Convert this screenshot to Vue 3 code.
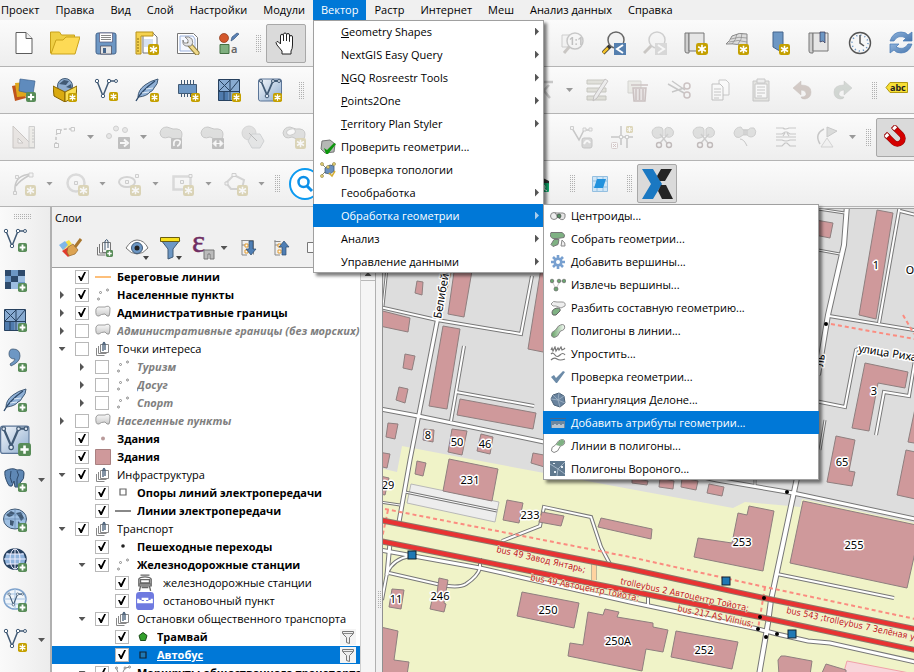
<script setup>
import { ref } from 'vue'

const mainMenu = ['Проект', 'Правка', 'Вид', 'Слой', 'Настройки', 'Модули', 'Вектор', 'Растр', 'Интернет', 'Меш', 'Анализ данных', 'Справка']

const vectorMenu = [
  { key: 'G', text: 'eometry Shapes', sub: true },
  { text: 'NextGIS Easy Query', sub: true },
  { key: 'N', text: 'GQ Rosreestr Tools', sub: true },
  { key: 'P', text: 'oints2One', sub: true },
  { key: 'T', text: 'erritory Plan Styler', sub: true },
  { text: 'Проверить геометрии...', icon: 'm-valid' },
  { text: 'Проверка топологии', icon: 'm-topo' },
  { text: 'Геообработка', sub: true },
  { text: 'Обработка геометрии', sub: true, open: true },
  { text: 'Анализ', sub: true },
  { text: 'Управление данными', sub: true }
]

const geometryMenu = [
  { text: 'Центроиды...', icon: 'm-centroid' },
  { text: 'Собрать геометрии...', icon: 'm-collect' },
  { text: 'Добавить вершины...', icon: 'm-gear' },
  { text: 'Извлечь вершины...', icon: 'm-extract' },
  { text: 'Разбить составную геометрию...', icon: 'm-multi' },
  { text: 'Полигоны в линии...', icon: 'm-poly' },
  { text: 'Упростить...', icon: 'm-simplify' },
  { text: 'Проверка геометрии...', icon: 'm-check' },
  { text: 'Триангуляция Делоне...', icon: 'm-delaunay' },
  { text: 'Добавить атрибуты геометрии...', icon: 'm-ruler', active: true },
  { text: 'Линии в полигоны...', icon: 'm-line' },
  { text: 'Полигоны Вороного...', icon: 'm-voronoi' }
]

const off = (icon, extra) => ({ icon, off: true, ...extra })
const grip = { grip: true }
const rows = [
  [
    { icon: 'new' }, { icon: 'open' }, { icon: 'save' }, { icon: 'layout' }, { icon: 'wrench' }, { icon: 'style' }, grip,
    { icon: 'hand', pressed: true }, { gap: 246 },
    off('zoom11'), { icon: 'zoomprev' }, off('zoomnext'), { icon: 'mapview' }, { icon: 'view3d' }, { icon: 'bookmarknew' },
    { icon: 'bookmark' }, { icon: 'clock' }, { icon: 'refresh' }
  ],
  [
    { icon: 'layers' }, { icon: 'geopackage' }, { icon: 'vnew' }, { icon: 'feathernew' }, { icon: 'chip' }, { icon: 'meshnew' }, { icon: 'vbox' },
    { grip: true, wide: true }, { gap: 213 },
    off('cross', { drop: true }), off('edit'), off('trash'), off('cut'), off('copy'), off('paste'), off('undo'), off('redo'),
    { grip: true, wide: true }, { icon: 'abc', slim: true }
  ],
  [
    off('measure'), off('curve', { drop: true }), off('points', { drop: true }), off('rotate'), off('scale'), off('hexa'), off('ring'),
    { gap: 246 },
    off('vtool'), off('trim'), off('split'), off('split'), off('merge'), off('offset'), off('rotsym', { drop: true }),
    grip, { icon: 'magnet', pressed: true }
  ],
  [
    off('arc', { drop: true }), off('circle', { drop: true }), off('ellipse', { drop: true }), off('rect', { drop: true }), off('poly', { drop: true }),
    grip, { icon: 'search', big: true }, { gap: 197 }, { icon: 'greenq' }, grip, { icon: 'bluesq' }, grip, { icon: 'nx', pressed: true, big: true }
  ]
]

const dock = [
  { icon: 'vplus' }, { icon: 'rasterplus' }, { icon: 'meshplus' }, { icon: 'comma' }, { icon: 'featherplus' },
  { icon: 'vboxplus', big: true }, { icon: 'postgis', drop: true }, { icon: 'wms' }, { icon: 'wcs' }, { icon: 'wfs' }, { icon: 'vstar', drop: true }
]

const panelTools = [
  { icon: 'brush' }, { icon: 'groupadd' }, { icon: 'eye' }, { icon: 'funnel' }, { icon: 'epsilon', drop: true },
  { icon: 'expand' }, { icon: 'collapse' }, { icon: 'remove' }
]

const tree = ref([
  { text: 'Береговые линии', icon: 't-line', on: true, bold: true },
  { text: 'Населенные пункты', icon: 't-points', on: true, bold: true, exp: 'right' },
  { text: 'Административные границы', icon: 't-area', on: true, bold: true, exp: 'right' },
  { text: 'Административные границы (без морских)', icon: 't-area', muted: true, exp: 'right' },
  { text: 'Точки интереса', icon: 't-group', exp: 'down' },
  { text: 'Туризм', icon: 't-points', muted: true, exp: 'right', level: 1 },
  { text: 'Досуг', icon: 't-points', muted: true, exp: 'right', level: 1 },
  { text: 'Спорт', icon: 't-points', muted: true, exp: 'right', level: 1 },
  { text: 'Населенные пункты', icon: 't-area', muted: true, exp: 'right' },
  { text: 'Здания', icon: 't-dot', on: true, bold: true },
  { text: 'Здания', icon: 't-fill', on: true, bold: true },
  { text: 'Инфраструктура', icon: 't-group', on: true, exp: 'down' },
  { text: 'Опоры линий электропередачи', icon: 't-square', on: true, bold: true, level: 1 },
  { text: 'Линии электропередачи', icon: 't-gray', on: true, bold: true, level: 1 },
  { text: 'Транспорт', icon: 't-group', on: true, exp: 'down' },
  { text: 'Пешеходные переходы', icon: 't-black', on: true, bold: true, level: 1 },
  { text: 'Железнодорожные станции', icon: 't-points', on: true, bold: true, exp: 'down', level: 1 },
  { text: 'железнодорожные станции', icon: 't-train', on: true, level: 2, large: true },
  { text: 'остановочный пункт', icon: 't-stop', on: true, level: 2, large: true },
  { text: 'Остановки общественного транспорта', icon: 't-group', on: true, exp: 'down', level: 1 },
  { text: 'Трамвай', icon: 't-pent', on: true, bold: true, level: 2, filter: true },
  { text: 'Автобус', icon: 't-bus', on: true, bold: true, level: 2, filter: true, selected: true },
  { text: 'Маршруты общественного транспорта', icon: 't-route', on: true, bold: true, exp: 'down', level: 1 }
])

const buildings = [
  '417,281 423,282 422,295 415,293', '455,265 473,265 464,317 448,314', '375,309 410,318 408,332 375,325',
  '443,326 460,329 447,409 429,406', '542,262 560,262 548,353 528,349', '405,354 415,356 412,370 403,368',
  '399,387 408,389 405,403 396,400', '460,399 536,413 533,429 457,415', '388,423 398,424 395,439 386,437',
  '424,429 434,430 433,442 423,440', '452,429 467,431 462,455 448,452', '481,434 493,437 490,454 477,451',
  '533,453 560,458 558,471 531,463', '378,452 390,454 387,468 378,466', '417,461 426,463 423,476 415,474',
  '449,459 498,469 492,501 443,491', '380,476 389,478 385,495 380,494', '507,500 523,503 519,523 503,520',
  '542,512 564,516 561,526 539,522', '601,518 652,529 651,539 598,527',
  '439,578 448,580 444,603 446,604 444,612 430,609 432,600 436,601', '392,589 404,590 401,609 389,607',
  '522,592 579,603 574,628 517,616',
  '588,612 603,615 605,609 619,612 617,617 653,623 653,627 668,630 663,652 646,649 642,671 568,656 570,643 583,645',
  '676,631 738,642 732,669 671,657', '385,628 398,631 394,660 409,662 407,675 380,675 380,627',
  '749,506 774,511 763,571 694,557 698,538 732,543 738,513 747,515', '803,501 921,526 907,588 790,563',
  '632,478 648,481 647,485 632,483', '660,478 674,481 673,489 659,487', '682,478 698,481 696,490 681,487',
  '709,484 724,487 722,496 707,493', '836,436 855,440 849,471 855,472 852,486 827,482',
  '906,450 920,453 920,500 897,495', '916,404 920,404 920,444 908,442', '877,210 893,213 876,319 859,315',
  '810,219 833,223 830,238 810,234', '865,363 908,372 905,388 878,383 869,431 852,428',
  '781,656 785,656 812,661 810,675 779,675 778,660', '826,664 846,670 846,675 821,675'
]

const roads = [
  { d: 'M387 268L383 306', w: 2 }, { d: 'M380 307L437 320L521 334L532 276', w: 3 }, { d: 'M464 346L451 421', w: 3 },
  { d: 'M456 392L534 406', w: 3 }, { d: 'M755 478V485', w: 2 }, { d: 'M777 574L894 598', w: 3 },
  { d: 'M818 209L845 213', w: 2 }, { d: 'M818 250L840 254', w: 2 }, { d: 'M829 316L920 331', w: 3 },
  { d: 'M900 205L879 323', w: 3 }, { d: 'M900 211L920 216', w: 3 }, { d: 'M862 347L856 350L845 407L815 401', w: 3 },
  { d: 'M825 420L820 450', w: 2 }, { d: 'M876 435L884 392L909 396L915 360', w: 3 },
  { d: 'M380 502L400 505', w: 2 }, { d: 'M405 492L497 511', w: 2 },
  { d: 'M502 541L540 526L544 507L591 517L601 547L611 566', w: 3 },
  { d: 'M389 573L437 584Q458 589 466 584Q478 576 480 568V558', w: 3 },
  { d: 'M410 556Q393 559 387 573L382 600', w: 3 }, { d: 'M390 543L387 575', w: 4 }, { d: 'M648 594V607', w: 3 },
  { d: 'M380 409L418 416L544 442L717 480L793 493L920 520', w: 4 },
  { d: 'M380 550L480 568L630 602L758 629L777 634L808 641L830 643L920 663', w: 4 },
  { d: 'M450 268L437 322L410 460L399 522', w: 4 },
  { d: 'M797 478L771 600L768 623L759 675', w: 5 },
  { d: 'M847 205L844 245L828 315L818 375', w: 5 }
]

const paths = ['M385 509L630 557L765 587L920 620', 'M388 510L382 538', 'M765 587L758 629', 'M831 324L920 340', 'M903 315L914 334']
const tramLines = ['M380 520L630 569L764 598L920 630', 'M380 541L630 591L760 617L920 651']
const crossings = [[826, 324], [787, 492], [764, 598], [760, 617], [758, 629], [766, 637], [777, 634]]
const stops = [[412, 555], [726, 581], [792, 634]]
const houseNumbers = [
  ['8', 428, 439], ['50', 457, 446], ['46', 485, 448], ['231', 470, 484], ['29', 388, 489], ['233', 530, 519], ['11', 396, 603],
  ['246', 440, 600], ['250', 548, 614], ['250А', 618, 645], ['252', 704, 654], ['253', 742, 546], ['255', 854, 549],
  ['65', 842, 466], ['3', 874, 395], ['1', 876, 269], ['О', 910, 274]
]
const routeLabels = [
  ['bus 49 Завод Янтарь;', 496, 552, 13], ['bus 49 Автоцентр Тойота;', 530, 580, 11], ['trolleybus 2 Автоцентр Тойота;', 620, 584, 12],
  ['bus 217 AS Vilnius;', 677, 611, 12], ['bus 543 ;trolleybus 7 Зелёная улица', 786, 613, 12]
]
</script>

<template>
  <svg class="paints" aria-hidden="true">
    <defs>
      <linearGradient id="g-blue" x1="0" y1="0" x2="1" y2="1"><stop offset="0" stop-color="#8fb3dc" /><stop offset="1" stop-color="#4a78ae" /></linearGradient>
      <linearGradient id="g-pale" x1="0" y1="0" x2="1" y2="1"><stop offset="0" stop-color="#f4f7fb" /><stop offset="1" stop-color="#8fadcf" /></linearGradient>
      <linearGradient id="g-gray" x1="0" y1="0" x2="0" y2="1"><stop offset="0" stop-color="#fafafa" /><stop offset="1" stop-color="#c9c9c9" /></linearGradient>
      <linearGradient id="g-green" x1="0" y1="0" x2="1" y2="0"><stop offset="0" stop-color="#62a062" /><stop offset="1" stop-color="#f5faf5" /></linearGradient>
    </defs>
  </svg>
  <svg class="sprite" aria-hidden="true">
    <symbol id="b-star" viewBox="0 0 10 10"><rect width="10" height="10" rx="2" fill="#c4a000" /><path d="M5 1.500v7M1.800 3.200l6.400 3.600M8.200 3.200L1.800 6.800" stroke="#fff" stroke-width="1.400" /></symbol>
    <symbol id="b-plus" viewBox="0 0 10 10"><rect width="10" height="10" rx="2" fill="#588c58" /><path d="M5 1.800v6.400M1.800 5h6.400" stroke="#fff" stroke-width="2" /></symbol>

    <symbol id="new" viewBox="0 0 24 24"><path d="M4 1.500h10l6 6v15H4z" fill="#fff" stroke="#5c5c5c" /><path d="M14 1.500v6h6" fill="#eee" stroke="#5c5c5c" /></symbol>
    <symbol id="open" viewBox="0 0 30 24"><path d="M.5 22V1h9l2 3h13v18z" fill="#efcf45" stroke="#c9a21a" /><path d="M1 23L6 9h7l3-3h14l-5 17z" fill="#fdda55" stroke="#c9a21a" /></symbol>
    <symbol id="save" viewBox="0 0 24 24"><rect x="2" y="2" width="20" height="21" rx="2" fill="#6d97c4" stroke="#44658c" /><path d="M5.500 2h13v9h-13z" fill="#fff" stroke="#557" stroke-width=".7" /><path d="M7 4.500h10M7 6.500h10M7 8.500h10" stroke="#888" /><path d="M6.500 15h11v8h-11z" fill="#e4e4e4" stroke="#445" stroke-width=".7" /><path d="M9 17h3v5H9z" fill="#44658c" /></symbol>
    <symbol id="layout" viewBox="0 0 24 24"><path d="M8 2h10l4 4v16H8z" fill="#fff" stroke="#777" /><path d="M1 1h17v4H6v18H1z" fill="#f5d24f" stroke="#b8921a" /><path d="M2 8h2M2 11h2M2 14h2M2 17h2M2 20h2" stroke="#8a6d10" /><path d="M9 8h9v8H9z" fill="#d6e1f2" /><use href="#b-star" x="13" y="13" width="11" height="11" /></symbol>
    <symbol id="wrench" viewBox="0 0 24 24"><path d="M1.500 2.500h16l4 4v16h-20z" fill="#fff" stroke="#777" /><path d="M4 5h13l2 3v12H4z" fill="#f5f8ff" stroke="#9cb2dd" /><path d="M13 13l8 9" stroke="#8a7a3a" stroke-width="5" stroke-linecap="round" /><path d="M14 14l7 8" stroke="#f0d98a" stroke-width="3.200" stroke-linecap="round" /><path d="M9 6l3 3v3l-4 0-1-3q-1 5 3 6l5 0q3-3 1-7-3-3-7-2z" fill="#e8e8e8" stroke="#777" stroke-width=".8" /></symbol>
    <symbol id="style" viewBox="0 0 24 24"><circle cx="7" cy="7" r="4.500" fill="#d4582c" stroke="#8a3414" stroke-width=".7" /><path d="M14 10l1-4 5-4 2 1-5 5z" fill="#5b82b5" stroke="#38577f" stroke-width=".7" /><path d="M3 13.500h9v9H3z" fill="#7faf7f" stroke="#437043" /><text x="14" y="22" font-family="Noto Sans" font-size="11" font-weight="600" fill="#666">a</text></symbol>
    <symbol id="hand" viewBox="0 0 24 24"><path d="M8 23v-3l-5-6q-2-3 0-3.500 1-.5 3.500 2.500V5q0-1.800 1.500-1.800T9.500 5v5V3.500Q9.500 2 11 2t1.500 1.500V10 4q0-1.500 1.500-1.500T15.500 4v6.500V6q0-1.500 1.500-1.500T18.500 6v8q0 4-1.500 6v3z" fill="#fff" stroke="#222" stroke-linejoin="round" /></symbol>
    <symbol id="zoom11" viewBox="0 0 24 24"><path d="M1 4h8v12H1z" fill="#eee" stroke="#888" /><path d="M9 15l-6 7" stroke="#8a7a6a" stroke-width="3" /><circle cx="14" cy="10" r="8" fill="#f5f5f5" stroke="#777" stroke-width="1.500" /><text x="8" y="14" font-family="Noto Sans" font-size="10" font-weight="700" fill="#666">1:1</text></symbol>
    <symbol id="zoomprev" viewBox="0 0 24 24"><path d="M9 14l-8 8" stroke="#333" stroke-width="4" /><path d="M6 17l-5 5" stroke="#f3c22b" stroke-width="2.500" /><circle cx="14" cy="9" r="8" fill="#f2f2f2" stroke="#666" stroke-width="1.500" /><path d="M12 12h12v12H12z" fill="#557fae" /><path d="M21 14l-6 4 6 4" fill="none" stroke="#fff" stroke-width="2" /></symbol>
    <symbol id="zoomnext" viewBox="0 0 24 24"><path d="M9 14l-8 8" stroke="#8a7a6a" stroke-width="3" /><circle cx="14" cy="9" r="8" fill="#f2f2f2" stroke="#888" stroke-width="1.500" /><path d="M12 12h12v12H12z" fill="#aaa" /><path d="M15 14l6 4-6 4" fill="none" stroke="#fff" stroke-width="2" /></symbol>
    <symbol id="mapview" viewBox="0 0 24 24"><path d="M1 2h4v20H3q-2 0-2-2z" fill="#d0d0d0" stroke="#777" /><path d="M5 2h15v18H5z" fill="#e6e6e6" stroke="#777" /><use href="#b-star" x="12" y="12" width="12" height="12" /></symbol>
    <symbol id="view3d" viewBox="0 0 24 24"><path d="M7 5q7-4 15-2v14q-8-5-21-4 4-3 6-8z" fill="#ddd" stroke="#888" /><path d="M6 8q8-3 16-1M4 11q9-3 18 0M12 3q-1 6-5 10M17 2q0 7-4 11" fill="none" stroke="#888" stroke-width=".7" /><use href="#b-star" x="13" y="13" width="11" height="11" /></symbol>
    <symbol id="bookmarknew" viewBox="0 0 24 24"><path d="M7 1h10v20l-5-2-5-3z" fill="#6d97c4" stroke="#44658c" /><use href="#b-star" x="13" y="13" width="11" height="11" /></symbol>
    <symbol id="bookmark" viewBox="0 0 24 24"><path d="M2 2h4v20H4q-2 0-2-2z" fill="#d0d0d0" stroke="#777" /><path d="M6 2h15v18H6z" fill="#e6e6e6" stroke="#777" /><path d="M13 1h5v11l-2-2-3 1z" fill="#6d97c4" stroke="#335" stroke-width=".7" /></symbol>
    <symbol id="clock" viewBox="0 0 24 24"><circle cx="12" cy="12" r="10.500" fill="#f7f7f7" stroke="#555" stroke-width="1.400" /><circle cx="12" cy="12" r="8" fill="none" stroke="#6d97c4" stroke-width="1.500" stroke-dasharray="1.200 3" /><path d="M12 4v8l4 3" fill="none" stroke="#555" stroke-width="1.500" /></symbol>
    <symbol id="refresh" viewBox="0 0 24 24"><path d="M1 10Q4 1 12 1q5 0 7 3l4-3v9h-9l3-3q-8-4-12 3z" fill="url(#g-blue)" stroke="#4678b5" stroke-width=".7" /><path d="M23 13q-3 9-11 9-5 0-7-3l-4 3v-9h9l-3 3q8 4 12-3z" fill="url(#g-blue)" stroke="#4678b5" stroke-width=".7" /></symbol>

    <symbol id="layers" viewBox="0 0 24 24"><path d="M0 8l10-2 4 14-11 3z" fill="#c0541c" /><path d="M3 5l12-1 2 14-12 1z" fill="#e0a81c" /><path d="M8 1l15 2-2 13-14-3z" fill="#5f8bbd" stroke="#3d638f" stroke-width=".7" /><use href="#b-plus" x="14" y="14" width="10" height="10" /></symbol>
    <symbol id="geopackage" viewBox="0 0 24 24"><circle cx="12" cy="8" r="7.500" fill="#8fadcf" stroke="#415a75" /><path d="M6 6l5-4 5 1-3 4zM13 9l5-3 1 5z" fill="#415a75" /><path d="M0 8l12 6v10L1 18z" fill="#d9aa10" stroke="#846200" /><path d="M12 14l12-6-1 10-11 6z" fill="#f9df55" stroke="#846200" /><use href="#b-star" x="15" y="15" width="9" height="9" /></symbol>
    <symbol id="vshape" viewBox="0 0 24 24"><path d="M3 3l6 15 6-15h7" fill="none" stroke="#415a75" stroke-width="1.500" /><g fill="#fff" stroke="#415a75"><circle cx="3" cy="3" r="1.700" /><circle cx="9" cy="18" r="1.700" /><circle cx="15" cy="3" r="1.700" /><circle cx="22" cy="3" r="1.500" /></g></symbol>
    <symbol id="vnew" viewBox="0 0 24 24"><use href="#vshape" width="24" height="24" /><use href="#b-star" x="15" y="14" width="9" height="9" /></symbol>
    <symbol id="vplus" viewBox="0 0 24 24"><use href="#vshape" width="24" height="24" /><use href="#b-plus" x="15" y="15" width="9" height="9" /></symbol>
    <symbol id="vstar" viewBox="0 0 24 24"><use href="#vshape" width="24" height="24" /><use href="#b-star" x="15" y="15" width="9" height="9" /></symbol>
    <symbol id="feather" viewBox="0 0 24 24"><path d="M3 19q0-7 7-12Q15 3 23 1q0 5-4 9-1 3-4 4-3 4-11 5z" fill="#8fb0d6" stroke="#415a75" /><path d="M1 23Q6 13 20 3" fill="none" stroke="#2e4a6b" stroke-width="1.300" /><path d="M7 15l7-1M11 11l7-1" fill="none" stroke="#e8f0f8" stroke-width=".9" /></symbol>
    <symbol id="feathernew" viewBox="0 0 24 24"><use href="#feather" width="24" height="24" /><use href="#b-star" x="15" y="15" width="9" height="9" /></symbol>
    <symbol id="featherplus" viewBox="0 0 24 24"><use href="#feather" width="24" height="24" /><use href="#b-plus" x="15" y="15" width="9" height="9" /></symbol>
    <symbol id="chip" viewBox="0 0 24 24"><path d="M5.500 2v17M8.500 2v17M11.500 2v17M14.500 2v17M17.500 2v17" stroke="#415a75" /><path d="M2.500 6.500h18v9h-18z" fill="#6d97c4" stroke="#415a75" /><use href="#b-star" x="15" y="15" width="9" height="9" /></symbol>
    <symbol id="mesh" viewBox="0 0 24 24"><path d="M1.500 1.500h21v21h-21z" fill="#88abd2" /><path d="M1.500 13.500h10v9h-10z" fill="#4f7bad" /><path d="M1.500 1.500h21v21h-21zM1.500 13.500h21M13 1.500v21M2 2l11 11M2 13L13 2M22 2l-9 11M7 14v8" fill="none" stroke="#27415f" /></symbol>
    <symbol id="meshnew" viewBox="0 0 24 24"><use href="#mesh" width="24" height="24" /><use href="#b-star" x="15" y="15" width="9" height="9" /></symbol>
    <symbol id="meshplus" viewBox="0 0 24 24"><use href="#mesh" width="24" height="24" /><use href="#b-plus" x="15" y="15" width="9" height="9" /></symbol>
    <symbol id="vboxbase" viewBox="0 0 24 24"><rect x=".5" y="1" width="23" height="22" rx="2" fill="url(#g-pale)" stroke="#5b7597" /><path d="M3 3l6 14 6-14h6" fill="none" stroke="#415a75" stroke-width="1.800" /><g fill="#dfe8f3" stroke="#415a75"><circle cx="3" cy="3" r="1.500" /><circle cx="9" cy="18" r="1.800" /><circle cx="15" cy="3" r="1.500" /><circle cx="21" cy="3" r="1.500" /></g></symbol>
    <symbol id="vbox" viewBox="0 0 24 24"><use href="#vboxbase" width="24" height="24" /><use href="#b-star" x="15" y="15" width="9" height="9" /></symbol>
    <symbol id="vboxplus" viewBox="0 0 24 24"><use href="#vboxbase" width="23" height="23" /><use href="#b-plus" x="14" y="14" width="10" height="10" /></symbol>
    <symbol id="cross" viewBox="0 0 24 24"><path d="M7 4h14M8 8l10 12M17 7L5 20" stroke="#777" stroke-width="2.500" /></symbol>
    <symbol id="edit" viewBox="0 0 24 24"><path d="M2 2h19v4H2zM2 10h19v4H2zM2 18h19v4H2z" fill="#bdbd9a" stroke="#777755" /><path d="M20 1l3 2L12 20l-4 3 1-5z" fill="#ddd" stroke="#766" /></symbol>
    <symbol id="trash" viewBox="0 0 24 24"><path d="M2 3h13v12H2z" fill="#d8d8c0" stroke="#998" /><path d="M5 7h17M7 10h13l-1 13H8zM10 11v11M13.500 11v11M17 11v11" fill="#dcc8c8" stroke="#966" stroke-width="1.500" /></symbol>
    <symbol id="cut" viewBox="0 0 24 24"><path d="M1 6l16 9M5 3l13 9M17 10L5 14" stroke="#777" stroke-width="1.500" /><circle cx="20" cy="8" r="3" fill="none" stroke="#966" stroke-width="1.500" /><circle cx="20" cy="17" r="3" fill="none" stroke="#966" stroke-width="1.500" /></symbol>
    <symbol id="copy" viewBox="0 0 24 24"><path d="M11 2h7l3 3v12H11z" fill="#fff" stroke="#777" /><path d="M4 6h8l3 3v13H4z" fill="#fff" stroke="#666" /><path d="M6 11h7M6 14h7M6 17h7M6 20h5" stroke="#777" /></symbol>
    <symbol id="paste" viewBox="0 0 24 24"><path d="M4 3h16v20H4z" fill="#c8c8b8" stroke="#777" /><path d="M6 6h12v14H6z" fill="#fff" stroke="#777" /><path d="M8 9h8M8 12h8M8 15h8M8 18h5" stroke="#777" /><path d="M8 1h8v4H8z" fill="#ddd" stroke="#777" /></symbol>
    <symbol id="undo" viewBox="0 0 24 24"><path d="M3 10l8-7v4q10 0 10 7 0 6-6 7-4 0-4-2 6 0 5-4-1-3-5-3v5z" fill="#aa7a62" stroke="#865" stroke-width=".5" /></symbol>
    <symbol id="redo" viewBox="0 0 24 24"><path d="M21 10l-8-7v4Q3 7 3 14q0 6 6 7 4 0 4-2-6 0-5-4 1-3 5-3v5z" fill="#8ca892" stroke="#777" stroke-width=".5" /></symbol>
    <symbol id="abc" viewBox="0 0 24 24"><path d="M1 9.500L5 4.500h17.500v10H5z" fill="#f7df35" stroke="#b29a10" /><text x="5" y="13" font-family="Noto Sans" font-size="9" font-weight="700" fill="#222">abc</text></symbol>

    <symbol id="measure" viewBox="0 0 24 24"><path d="M1 1l22 22H1zM6 13v5h5z" fill="#dac6ba" stroke="#8a7468" fill-rule="evenodd" /><path d="M17 1.500h5.500v21H17z" fill="#e0dac6" stroke="#888" /><path d="M20 5h2M20 8h2M20 11h2M20 14h2M20 17h2" stroke="#777" /></symbol>
    <symbol id="curve" viewBox="0 0 24 24"><path d="M3 20V13Q3 4 14 4h6" fill="none" stroke="#777" stroke-width="1.500" stroke-dasharray="3 2" /><path d="M1.500 18.500h4v4h-4zM3.500 4.500h4v4h-4zM18 2.500h3.500V6H18z" fill="#fff" stroke="#777" /></symbol>
    <symbol id="points" viewBox="0 0 24 24"><g fill="#ccc" stroke="#888"><circle cx="3" cy="11" r="2.500" /><circle cx="10" cy="3.500" r="2.500" /><circle cx="19" cy="5" r="2.500" /></g><rect x="12" y="12" width="12" height="12" rx="1" fill="#666" /><path d="M14 18h6M18 14.500l4 3.500-4 3.500" fill="none" stroke="#fff" stroke-width="2" /></symbol>
    <symbol id="blob" viewBox="0 0 24 24"><path d="M1 8Q2 2 8 2l6 2q9-1 9 5 0 7-6 6L10 12Q2 15 1 8z" fill="#b5b9b5" stroke="#777" /></symbol>
    <symbol id="rotate" viewBox="0 0 24 24"><use href="#blob" width="24" height="24" /><rect x="12" y="13" width="11" height="11" rx="1" fill="#666" /><path d="M15 21q-1-6 3-6t3 3-3 3" fill="none" stroke="#fff" stroke-width="1.700" /></symbol>
    <symbol id="scale" viewBox="0 0 24 24"><use href="#blob" width="24" height="24" /><rect x="12" y="13" width="12" height="11" rx="1" fill="#666" /><path d="M13 18.500l3-3v6zM23 18.500l-3-3v6zM15 18.500h6" fill="#fff" stroke="#fff" /></symbol>
    <symbol id="hexa" viewBox="0 0 24 24"><circle cx="8" cy="8" r="7" fill="#bbb" stroke="#999" /><path d="M11 9h8l4 7-4 7h-8l-4-7z" fill="#c8cdd2" stroke="#8a949c" /><path d="M8 8l8 8" stroke="#555" /></symbol>
    <symbol id="ring" viewBox="0 0 24 24"><use href="#blob" width="24" height="24" /><ellipse cx="9" cy="7" rx="4.500" ry="3" fill="#fff" stroke="#888" transform="rotate(-20 9 7)" /><use href="#b-star" x="13" y="13" width="11" height="11" /></symbol>
    <symbol id="vtool" viewBox="0 0 24 24"><path d="M3 3l7 12 5-10h7" fill="none" stroke="#777" stroke-width="1.500" /><path d="M1.500 1.500h3v3h-3zM14 3h3v3h-3zM20 3h3v3h-3z" fill="#eee" stroke="#888" /><rect x="13" y="13" width="10" height="10" rx="2" fill="#aaa" stroke="#777" /><path d="M15 19q3-6 6-1" fill="none" stroke="#fff" stroke-width="2" /></symbol>
    <symbol id="trim" viewBox="0 0 24 24"><path d="M11 1v12M1 12h22M11 13v7M17 12v11" fill="none" stroke="#777" stroke-width="1.500" /><path d="M9.500 10.500h3v3h-3zM15.500 10.500h3v3h-3z" fill="#fff" stroke="#888" /><rect x="1.500" y="17.500" width="6" height="6" rx="1" fill="#fff" stroke="#b88" /><path d="M3 19l3 3M6 19l-3 3" stroke="#b66" /><use href="#b-star" x="16" y="1" width="7" height="7" /></symbol>
    <symbol id="split" viewBox="0 0 24 24"><path d="M1 7Q2 2 8 2q4 0 4 3v6Q6 15 3 12 1 10 1 7zM14 4q2-3 6-1 4 3 2 7-3 4-8 1z" fill="#b5b9b5" stroke="#888" /><path d="M9 18l8-9M16 18L9 9" stroke="#888" stroke-width="1.500" /><circle cx="8" cy="20" r="2.500" fill="none" stroke="#755" stroke-width="1.400" /><circle cx="18" cy="20" r="2.500" fill="none" stroke="#755" stroke-width="1.400" /></symbol>
    <symbol id="merge" viewBox="0 0 24 24"><path d="M1 8Q2 2 8 2l2 3h5q2-3 6-2 3 3 1 7-4 4-8 0h-4Q6 14 3 12 1 10 1 8z" fill="#b5b9b5" stroke="#888" /><path d="M10 5h5M10 7h5M10 9h5M7 14q4 0 7 7" fill="none" stroke="#777" /></symbol>
    <symbol id="offset" viewBox="0 0 24 24"><path d="M2 3h7q2 2 6 0h7M2 9h6l3-2h2l3 2h6M2 12h20M2 15h6q4 2 8 0h6M2 21h6l3-3h2l3 3h6M9 11l2-3M15 11l-2-3" fill="none" stroke="#777" stroke-width="1.200" /></symbol>
    <symbol id="rotsym" viewBox="0 0 24 24"><path d="M12 2v10l10-6z" fill="#aab0ac" stroke="#777" /><path d="M12 13l6 9H6z" fill="#eee" stroke="#999" /><path d="M5 19Q-1 9 9 4" fill="none" stroke="#777" stroke-width="1.500" /></symbol>
    <symbol id="magnet" viewBox="0 0 24 24"><g transform="rotate(-45 12 12)" fill="none"><path d="M6.500 4v10a5.500 5.500 0 0 0 11 0V4" stroke="#8e1010" stroke-width="5.600" /><path d="M6.500 4v10a5.500 5.500 0 0 0 11 0V4" stroke="#d40000" stroke-width="4.600" /><path d="M6.500 2v5M17.500 2v5" stroke="#a01010" stroke-width="5.600" /><path d="M6.500 3v3M17.500 3v3" stroke="#fff" stroke-width="4" /></g></symbol>

    <symbol id="arc" viewBox="0 0 24 24"><path d="M3 20V15Q4 3 19 2M4 14q4-6 14-11" fill="none" stroke="#777" stroke-width="1.500" /><path d="M1.500 19.500h3v3h-3zM3.500 3.500h3v3h-3zM17 1h4v4h-4z" fill="#eee" stroke="#888" /><use href="#b-star" x="13" y="13" width="11" height="11" /></symbol>
    <symbol id="circle" viewBox="0 0 24 24"><circle cx="11" cy="11" r="8.500" fill="none" stroke="#aaa" stroke-width="2.500" /><path d="M9.500 9.500h3v3h-3z" fill="#eee" stroke="#888" /><use href="#b-star" x="13" y="13" width="11" height="11" /></symbol>
    <symbol id="ellipse" viewBox="0 0 24 24"><ellipse cx="9" cy="10" rx="8" ry="5" fill="none" stroke="#999" stroke-width="2" /><path d="M7.500 8.500h3v3h-3zM17.500 2.500h3v3h-3z" fill="#eee" stroke="#888" /><use href="#b-star" x="12" y="13" width="11" height="11" /></symbol>
    <symbol id="rect" viewBox="0 0 24 24"><path d="M2.500 4.500h17v13h-17z" fill="none" stroke="#aaa" stroke-width="2.500" /><path d="M9.500 8.500h3v3h-3zM18 2.500h3v3h-3z" fill="#eee" stroke="#888" /><use href="#b-star" x="12" y="13" width="11" height="11" /></symbol>
    <symbol id="poly" viewBox="0 0 24 24"><path d="M2 11l8-8 10 5-2 9H7z" fill="none" stroke="#999" stroke-width="2" /><path d="M8 1.500h4v3H8zM1 10h3v3H1z" fill="#eee" stroke="#888" /><use href="#b-star" x="13" y="13" width="11" height="11" /></symbol>
    <symbol id="search" viewBox="0 0 32 32"><circle cx="16" cy="16" r="15" fill="#fff" stroke="#0c9af0" stroke-width="2" /><circle cx="14.500" cy="14" r="5" fill="none" stroke="#0c8fe8" stroke-width="2.500" /><path d="M18 18l5 5" stroke="#0c8fe8" stroke-width="3" /></symbol>
    <symbol id="greenq" viewBox="0 0 24 24"><path d="M8 4l10 5v6H8z" fill="#333" /><rect x="7" y="11" width="11" height="9" rx="1" fill="#12a86c" /><circle cx="12" cy="15" r="2" fill="none" stroke="#fff" /><path d="M13 17l3 2" stroke="#fff" /></symbol>
    <symbol id="bluesq" viewBox="0 0 24 24"><path d="M4.500 4.500h15v15h-15zM9 4v16M15 4v16M4 9h16M4 15h16" fill="#cfe6f7" stroke="#94bfe0" /><path d="M9 7h9l-3 9H6z" fill="#2292dd" /></symbol>
    <symbol id="nx" viewBox="0 0 32 32"><path d="M1 1h11l9 15-9 15H1l9-15z" fill="#1a78c2" /><path d="M20 1h11l-7 12h-5l-3-5zM17 23l3-6h5l7 14H21z" fill="#242424" /></symbol>

    <symbol id="rasterplus" viewBox="0 0 24 24"><path d="M2 2h20v19H2z" fill="#6d97c4" /><path d="M2 2h6v6H2zM15 2h7v6h-7zM8 8h7v6H8zM2 14h6v7H2z" fill="#2e4a6b" /><path d="M15 8h7v6h-7zM8 14h7v7H8z" fill="#9dbde0" /><use href="#b-plus" x="15" y="15" width="9" height="9" /></symbol>
    <symbol id="comma" viewBox="0 0 24 24"><path d="M10 1q7 0 7 7 0 6-9 10l-1-2q5-3 5-5-6 0-6-5t4-5z" fill="#6d97c4" stroke="#415a75" stroke-width=".8" /><use href="#b-plus" x="15" y="15" width="9" height="9" /></symbol>
    <symbol id="postgis" viewBox="0 0 24 24"><path d="M2 3Q9-1 14 2q7-1 7 3 1 6-4 10l-1 4h-4l-1-6-2 5q-3 1-4-2Q1 8 2 3z" fill="#5f88b5" stroke="#2e4a6b" /><path d="M8 3q-2 7 1 12M14 3q3 4 0 8v7" fill="none" stroke="#2e4a6b" /><use href="#b-plus" x="15" y="15" width="9" height="9" /></symbol>
    <symbol id="wms" viewBox="0 0 24 24"><ellipse cx="12" cy="11" rx="11.500" ry="10" fill="#9fc0e3" stroke="#415a75" /><path d="M3 7l5-4 4 2-3 3-3 1zM13 5l5-1 3 6-3 3-2-4zM7 12l4 1-1 5-3-1zM15 13l3 3-3 2z" fill="#415a75" /><path d="M1 11h22M12 1v20M4 5q8 4 16 0" fill="none" stroke="#5a7da5" stroke-width=".6" /><use href="#b-plus" x="15" y="15" width="9" height="9" /></symbol>
    <symbol id="wcs" viewBox="0 0 24 24"><ellipse cx="12" cy="11" rx="11" ry="10" fill="#8fb3dc" stroke="#27415f" stroke-width="1.500" /><path d="M4 4q8-5 16 0l-2 2H6zM4 18l2-2h12l2 2q-8 5-16 0z" fill="#27415f" /><ellipse cx="12" cy="11" rx="5" ry="10" fill="none" stroke="#eef" /><path d="M1 11h22M12 1v20M3 6h18M3 16h18" stroke="#eef" /><use href="#b-plus" x="15" y="15" width="9" height="9" /></symbol>
    <symbol id="wfs" viewBox="0 0 24 24"><ellipse cx="12" cy="11" rx="11" ry="10" fill="#f0f5fa" stroke="#7fa3cc" stroke-width="1.500" /><path d="M1 11h22M3 6h18M3 16h18M12 1v20" stroke="#a5c3e3" /><use href="#vshape" x="4" y="4" width="17" height="17" /><use href="#b-plus" x="15" y="15" width="9" height="9" /></symbol>

    <symbol id="brush" viewBox="0 0 24 24"><path d="M1 9l9-5 3 4-9 6z" fill="#f5e14a" /><path d="M0 9l6-4 3 4-5 5z" fill="#7fb6e8" /><path d="M3 15l8-5 5 5-7 6z" fill="#e23a2c" /><path d="M9 11l5-3 5 6-3 4-6 2-2-4z" fill="#dca352" stroke="#946528" stroke-width=".7" /><path d="M16 11l6-8" stroke="#a8762e" stroke-width="3" /></symbol>
    <symbol id="groupadd" viewBox="0 0 24 24"><path d="M5.500 11v8h8M7.500 8v9h9M10.500 6.500h8v10h-8z" fill="#f8f8f8" stroke="#777" /><path d="M13 14V5q2-3 3 0v7" fill="none" stroke="#415a75" /><use href="#b-plus" x="14" y="14" width="7" height="7" /></symbol>
    <symbol id="eye" viewBox="0 0 24 24"><path d="M1 12q5-8 11-8 7 0 11 8-5 6-11 6T1 12z" fill="#fff" stroke="#777" /><circle cx="12" cy="12" r="5.500" fill="#6d97c4" stroke="#415a75" /><circle cx="12" cy="12" r="2.500" fill="#222" /><path d="M18 20h6l-3 4z" fill="#444" /></symbol>
    <symbol id="funnel" viewBox="0 0 24 24"><path d="M3 4l7 9v10l5-2v-8l7-9z" fill="#6d97c4" stroke="#415a75" /><path d="M2.500 1.500h19v4h-19z" fill="#f8e01c" stroke="#6b5d10" /><path d="M18 20h6l-3 4z" fill="#444" /></symbol>
    <symbol id="epsilon" viewBox="0 0 24 24"><text x="1" y="16" font-family="Liberation Serif" font-size="31" fill="#6f2e62" stroke="#6f2e62" stroke-width=".5">ε</text><path d="M13 14v9h4v-5h2v5h4v-9z" fill="#bbb" stroke="#777" /></symbol>
    <symbol id="expand" viewBox="0 0 24 24"><path d="M5 4v15h5M5 9h5M4.500 4.500h12v14" fill="none" stroke="#888" /><path d="M8 8h3v3H8zM8 14h3v3H8z" fill="#fff" stroke="#e29a2c" /><path d="M12 5h4v8h3l-5 6-5-6h3z" fill="#4f7fb5" stroke="#2e4a6b" stroke-width=".7" /></symbol>
    <symbol id="collapse" viewBox="0 0 24 24"><path d="M5 4v15h5M5 9h5M4.500 5.500h6" fill="none" stroke="#888" /><path d="M8 8h3v3H8zM8 14h3v3H8z" fill="#fff" stroke="#e29a2c" /><path d="M12 19h4v-8h3l-5-6-5 6h3z" fill="#4f7fb5" stroke="#2e4a6b" stroke-width=".7" /></symbol>
    <symbol id="remove" viewBox="0 0 24 24"><path d="M4.500 6.500h13v10h-13z" fill="#fafafa" stroke="#777" /></symbol>

    <symbol id="m-valid" viewBox="0 0 16 16"><path d="M2 2l8-1 5 4-1 8-9 1-4-4z" fill="#b5b8b5" stroke="#777" /><path d="M4 9l3 2 7-7 2 1-8 10H6z" fill="#0c960c" /></symbol>
    <symbol id="m-topo" viewBox="0 0 16 16"><path d="M2 2l4 4M2 13l4-4M13 2l-3 3" stroke="#8a8a6a" /><path d="M5 11V6l5-3 4 1v5l-4 3z" fill="#6a90bf" stroke="#415a75" stroke-width=".8" /><g fill="#e8d478" stroke="#8a7a3a" stroke-width=".6"><circle cx="2" cy="2" r="1.500" /><circle cx="8" cy="5" r="1.500" /><circle cx="14" cy="2" r="1.500" /><circle cx="2" cy="14" r="1.500" /></g><path d="M9 11l3 3 3-5" fill="none" stroke="#d4ae35" stroke-width="1.500" /></symbol>
    <symbol id="m-centroid" viewBox="0 0 16 16"><circle cx="4" cy="8" r="3.500" fill="#eee" stroke="#888" /><path d="M5 5h8q3 0 2 4-1 4-5 2z" fill="#e4e4e4" stroke="#888" /><circle cx="9" cy="8" r="2" fill="#558d62" stroke="#333" stroke-width=".6" /></symbol>
    <symbol id="m-collect" viewBox="0 0 16 16"><path d="M1 1.500h11q4 2 2 5l-7 1H3Q-1 6 1 1.500zM4 8.500h5l-1 5-5 2-2-2z" fill="#7fb183" stroke="#777" /><path d="M12 9q4 3 3 6h-4z" fill="#eee" stroke="#888" /></symbol>
    <symbol id="m-gear" viewBox="0 0 16 16"><path d="M8 1v14M1 8h14M3 3l10 10M13 3L3 13" stroke="#78a0d0" stroke-width="2.600" /><circle cx="8" cy="8" r="4.500" fill="#78a0d0" /><circle cx="8" cy="8" r="2" fill="#fff" /></symbol>
    <symbol id="m-extract" viewBox="0 0 16 16"><path d="M2 4l4 8 4-8h4" fill="none" stroke="#ccc" /><g fill="#6aa56f" stroke="#666" stroke-width=".7"><circle cx="2" cy="4" r="1.800" /><circle cx="9" cy="4" r="1.800" /><circle cx="14" cy="4" r="1.800" /><circle cx="6" cy="12" r="2" /></g></symbol>
    <symbol id="m-multi" viewBox="0 0 16 16"><path d="M1 4q2-4 6-2h5q4 0 3 4l-4 2-5-2H3z" fill="#eee" stroke="#999" /><path d="M2 13q0-4 5-5 4 0 3 3l-4 4q-4 1-4-2z" fill="#7fb183" stroke="#666" /></symbol>
    <symbol id="m-poly" viewBox="0 0 16 16"><path d="M1.500 13q-1-4 4-6l3-4q5-3 6 0 1 4-4 5l-3 5q-4 3-6 0z" fill="url(#g-green)" stroke="#888" /></symbol>
    <symbol id="m-simplify" viewBox="0 0 16 16"><path d="M1 4l1-2 1 3 2-4 1 4 2-3 1 2 2-3 1 3 2-1 1-1M1 8q2-2 4 1t5 0 5 0M1 14q3-3 6-1t8 0" fill="none" stroke="#777" stroke-width="1.200" /></symbol>
    <symbol id="m-check" viewBox="0 0 16 16"><path d="M1 8l3-2 2 3 7-7 2 1-8 11H6z" fill="#6c8ba8" /></symbol>
    <symbol id="m-delaunay" viewBox="0 0 16 16"><path d="M3 3l6-2 5 3 1 7-5 4-6-2-3-6z" fill="#69839e" stroke="#4c6379" /><path d="M3 3l5 5 6-4M8 8l2 7M8 8l7 3M8 8l-7-1M9 1L8 8" fill="none" stroke="#a2b5c7" stroke-width=".8" /></symbol>
    <symbol id="m-ruler" viewBox="0 0 16 16"><path d="M0 3h16v1H0z" fill="#3d6894" /><path d="M1 6h14v7H1z" fill="#6e879e" /><path d="M3 13v-3M5 13V9M7 13v-3M9 13V9M11 13v-3M13 13V9" stroke="#fff" /></symbol>
    <symbol id="m-line" viewBox="0 0 16 16"><path d="M1.500 13q-1-4 4-6l3-4q5-3 6 0 1 4-4 5l-3 5q-4 3-6 0z" fill="#fff" stroke="#888" /><path d="M6 7l3-4q4-3 5 0 1 4-4 5z" fill="#7fb183" /></symbol>
    <symbol id="m-voronoi" viewBox="0 0 16 16"><path d="M0 0h15v15H0z" fill="#60798f" /><path d="M0 3l8 5 7-7M8 8l-1 7M8 8l7 5" fill="none" stroke="#a2b5c7" /><path d="M4 10h2v2H4zM3 2h2v1H3zM11 5h2v2h-2z" fill="#e5edf4" /></symbol>

    <symbol id="t-line" viewBox="0 0 16 16"><path d="M0 8h16" stroke="#fdbf7a" stroke-width="2" /></symbol>
    <symbol id="t-gray" viewBox="0 0 16 16"><path d="M0 8h16" stroke="#888" stroke-width="2" /></symbol>
    <symbol id="t-points" viewBox="0 0 16 16"><g fill="#fff" stroke="#888"><circle cx="3.500" cy="12" r="1" /><circle cx="5.500" cy="5.500" r="1" /><circle cx="12.500" cy="3" r="1" /></g></symbol>
    <symbol id="t-area" viewBox="0 0 16 16"><path d="M1 4q1-3 5-2h4q4-2 5 1 0 6-1 8-2 1-4-2-4 0-6 2-4 1-3-7z" fill="url(#g-gray)" stroke="#888" stroke-width=".8" /></symbol>
    <symbol id="t-group" viewBox="0 0 16 16"><path d="M1.500 7v7.500h8M3.500 5v7.500h8M5.500 3.500h8v8h-8z" fill="none" stroke="#888" /><path d="M8 10V3q1-3 2 0v6" fill="none" stroke="#415a75" stroke-width="1.300" /></symbol>
    <symbol id="t-dot" viewBox="0 0 16 16"><circle cx="8" cy="7.500" r="2" fill="#b99a9a" /></symbol>
    <symbol id="t-fill" viewBox="0 0 16 16"><path d="M.5.500h15v15H.5z" fill="#cf999b" stroke="#a98080" /></symbol>
    <symbol id="t-square" viewBox="0 0 16 16"><path d="M5 4h6v6H5z" fill="#fff" stroke="#666" stroke-width="1.200" /></symbol>
    <symbol id="t-black" viewBox="0 0 16 16"><circle cx="8" cy="7" r="1.800" fill="#222" /></symbol>
    <symbol id="t-train" viewBox="0 0 16 16"><path d="M4 1h8M2.500 4.500q1-2 5.500-2t5.500 2v6h-11zM4 5h8v3H4zM4 11l-1 4M12 11l1 4M5 12h6M3 9h10" fill="none" stroke="#666" stroke-width="1.200" /></symbol>
    <symbol id="t-stop" viewBox="0 0 16 16"><rect width="16" height="16" rx="3" fill="#6f7ae0" /><path d="M1 6h2v3H1zM5 5h6v2h2v3H3V7h2zM13 6h2v3h-2zM1 9h14v1H1z" fill="#fff" /><path d="M5 7h2v1H5zM9 7h2v1H9z" fill="#6f7ae0" /></symbol>
    <symbol id="t-pent" viewBox="0 0 16 16"><path d="M8 3.500l4 3-1.500 5h-5L4 6.500z" fill="#33a02c" stroke="#1a4a18" /></symbol>
    <symbol id="t-bus" viewBox="0 0 16 16"><path d="M5 5h6v6H5z" fill="#1f78b4" stroke="#123" stroke-width="1.200" /></symbol>
    <symbol id="t-route" viewBox="0 0 16 16"><path d="M1 2l4 11 5-10 5-1" fill="none" stroke="#888" /><g fill="#fff" stroke="#888"><circle cx="1.500" cy="3" r="1" /><circle cx="10" cy="3" r="1" /><circle cx="14.500" cy="2" r="1" /></g></symbol>
    <symbol id="t-filter" viewBox="0 0 16 16"><path d="M2.500 2.500h11v2L9.500 8.500v6l-3-1v-5l-4-4z" fill="#eee" stroke="#777" /><path d="M3 4.500h10" stroke="#888" /></symbol>
  </svg>

  <div class="window">
    <nav class="menubar">
      <div v-for="m in mainMenu" :key="m" class="menu-slot">
        <button type="button" class="menu-title" :class="{ current: m === 'Вектор' }">{{ m }}</button>
        <ul v-if="m === 'Вектор'" class="menu">
          <li v-for="i in vectorMenu" :key="i.text">
            <button type="button" class="entry" :class="{ active: i.open }">
              <svg v-if="i.icon" class="menu-icon"><use :href="'#' + i.icon" /></svg>
              <span><u v-if="i.key">{{ i.key }}</u>{{ i.text }}</span>
              <i v-if="i.sub" class="tri right"></i>
            </button>
            <ul v-if="i.open" class="menu submenu">
              <li v-for="g in geometryMenu" :key="g.text">
                <button type="button" class="entry" :class="{ active: g.active }">
                  <svg class="menu-icon"><use :href="'#' + g.icon" /></svg>
                  <span>{{ g.text }}</span>
                </button>
              </li>
            </ul>
          </li>
        </ul>
      </div>
    </nav>

    <div v-for="(row, r) in rows" :key="r" class="toolbar">
      <template v-for="(t, n) in row" :key="n">
        <span v-if="t.grip" class="grip-cell" :class="{ wide: t.wide }"><i class="grip"></i></span>
        <span v-else-if="t.gap" class="gap" :style="{ width: t.gap + 'px' }"></span>
        <button v-else type="button" class="tool" :class="{ pressed: t.pressed, drop: t.drop, slim: t.slim }" :disabled="t.off" :aria-label="t.icon">
          <svg class="icon" :class="{ big: t.big, wide: t.icon === 'open' }"><use :href="'#' + t.icon" /></svg>
          <i v-if="t.drop" class="tri down"></i>
        </button>
      </template>
    </div>

    <main class="work">
      <aside class="dock">
        <i class="grip dock-grip"></i>
        <button v-for="d in dock" :key="d.icon" type="button" class="dock-tool" :aria-label="d.icon">
          <svg class="icon" :class="{ large: d.big }"><use :href="'#' + d.icon" /></svg>
          <i v-if="d.drop" class="tri down"></i>
        </button>
      </aside>

      <section class="panel">
        <h2>Слои</h2>
        <div class="panel-tools">
          <button v-for="p in panelTools" :key="p.icon" type="button" class="panel-tool" :aria-label="p.icon">
            <svg class="icon"><use :href="'#' + p.icon" /></svg>
            <i v-if="p.drop" class="tri down"></i>
          </button>
        </div>
        <div class="tree-box">
          <ul class="tree">
            <li v-for="(t, n) in tree" :key="n" :class="{ selected: t.selected }" :style="{ paddingLeft: (t.level || 0) * 20 + 'px' }">
              <span class="expander"><i v-if="t.exp" class="tri" :class="t.exp"></i></span>
              <input :id="'layer' + n" v-model="t.on" type="checkbox" />
              <svg class="tree-icon" :class="{ large: t.large }"><use :href="'#' + t.icon" /></svg>
              <label :for="'layer' + n" :class="{ bold: t.bold, muted: t.muted }">{{ t.text }}</label>
              <button v-if="t.filter" type="button" class="filter" aria-label="Фильтр"><svg class="menu-icon"><use href="#t-filter" /></svg></button>
            </li>
          </ul>
          <div class="scroll"><span class="scroll-up"><i class="tri up"></i></span></div>
        </div>
      </section>

      <div class="splitter"><i class="grip split-grip"></i></div>

      <section class="map">
        <svg viewBox="383 209 531 463" preserveAspectRatio="xMinYMin slice" role="img" aria-label="Карта">
          <rect x="383" y="209" width="531" height="463" fill="#dddddd" />
          <path d="M402 446L470 459L630 489L733 508L745 502L790 506L800 507L802 499L920 524V680H380V468L397 472z" fill="#f0f3c8" />
          <path d="M847 661L920 675H843z" fill="#f8d5da" stroke="#f0a0a8" />
          <path d="M411 484L499 502L495 522L407 503z" fill="#ededed" stroke="#b8b8b8" />
          <g class="casing"><path v-for="r in roads" :key="r.d" :d="r.d" :stroke-width="r.w + 1" /></g>
          <g class="asphalt"><path v-for="r in roads" :key="r.d" :d="r.d" :stroke-width="r.w - 1" /></g>
          <path d="M594 562V580" stroke="#8a7a6a" stroke-width="5" />
          <path d="M594 562V580" stroke="#ffd3a0" stroke-width="4" />
          <g class="buildings"><polygon v-for="b in buildings" :key="b" :points="b" /></g>
          <g class="foot"><path v-for="p in paths" :key="p" :d="p" /></g>
          <g fill="none">
            <path v-for="t in tramLines" :key="t" :d="t" stroke="#8c7a6c" stroke-width="6" />
            <path v-for="t in tramLines" :key="t" :d="t" stroke="#e93232" stroke-width="4" />
          </g>
          <circle v-for="c in crossings" :key="c[0]" :cx="c[0]" :cy="c[1]" r="2" />
          <rect v-for="s in stops" :key="s[0]" :x="s[0] - 4" :y="s[1] - 4" width="8" height="8" fill="#1f78b4" stroke="#12202c" />
          <g class="route"><text v-for="l in routeLabels" :key="l[0]" :transform="`translate(${l[1]} ${l[2]}) rotate(${l[3]})`">{{ l[0] }}</text></g>
          <g class="house"><text v-for="h in houseNumbers" :key="h[0]" :x="h[1]" :y="h[2]">{{ h[0] }}</text></g>
          <g class="street">
            <text transform="translate(441 319) rotate(-80)">Белибейская улица</text>
            <text transform="translate(858 352) rotate(9)">улица Рихарда</text>
            <text transform="translate(823 367) rotate(-80)">ль</text>
          </g>
        </svg>
      </section>
    </main>
  </div>
</template>

<style>
body {
  margin: 0;
  overflow: hidden;
}
</style>

<style scoped>
.paints {
  position: absolute;
  width: 0;
  height: 0;
}
.sprite {
  display: none;
}
.window {
  display: flex;
  flex-direction: column;
  height: 100vh;
  overflow: hidden;
  background: #f0f0f0;
  color: #000;
  font: 11px/18px "Open Sans", "Noto Sans", sans-serif;
}
button {
  margin: 0;
  padding: 0;
  border: 0;
  background: none;
  color: inherit;
  font: inherit;
}
ul {
  margin: 0;
  padding: 0;
  list-style: none;
}
svg {
  flex: none;
}
.icon {
  width: 24px;
  height: 24px;
}
.icon.big {
  width: 32px;
  height: 32px;
}
.icon.large {
  width: 31px;
  height: 31px;
}
.icon.wide {
  width: 30px;
}
.tri {
  flex: none;
  width: 7px;
  height: 4px;
  background: #555;
  clip-path: polygon(0 0, 100% 0, 50% 100%);
}
.tri.right {
  width: 4px;
  height: 8px;
  clip-path: polygon(0 0, 100% 50%, 0 100%);
}
.tri.up {
  clip-path: polygon(0 100%, 100% 100%, 50% 0);
}
.grip {
  width: 5px;
  height: 17px;
  background: conic-gradient(from 270deg at 1px 1px, #b0b0b0 90deg, transparent 0) 0 0 / 2px 2px;
}

.menubar {
  display: flex;
  flex: none;
  height: 20px;
  margin-left: -7px;
  position: relative;
  z-index: 5;
}
.menu-slot {
  position: relative;
}
.menu-title {
  height: 20px;
  padding: 0 8px;
  white-space: nowrap;
}
.menu-title.current,
.entry.active {
  background: #0078d7;
  color: #fff;
}
.menu {
  position: absolute;
  top: 20px;
  left: 0;
  width: 231px;
  background: #fff;
  outline: 1px solid #a0a0a0;
  outline-offset: -1px;
  box-shadow: 3px 3px 3px rgba(0, 0, 0, 0.5);
}
.menu li {
  position: relative;
}
.submenu {
  top: 0;
  left: 230px;
  width: 276px;
  z-index: 2;
}
.entry {
  display: flex;
  align-items: center;
  width: 100%;
  height: 23px;
  padding: 0 5px 0 28px;
  position: relative;
  text-align: left;
  white-space: nowrap;
}
.entry span {
  flex: 1;
}
.entry .menu-icon {
  margin-left: -21px;
  margin-right: 5px;
}
.entry.active .tri {
  background: #a8cdec;
}
.menu-icon {
  display: block;
  width: 16px;
  height: 16px;
}

.toolbar {
  display: flex;
  align-items: center;
  flex: none;
  height: 47px;
  padding-left: 4px;
  box-sizing: border-box;
  overflow: hidden;
  border-bottom: 1px solid #b4b4b4;
  background: linear-gradient(#fbfbfb, #eeeeee);
}
.toolbar:nth-of-type(4) {
  height: 46px;
}
.tool {
  display: flex;
  align-items: center;
  justify-content: center;
  flex: none;
  box-sizing: border-box;
  width: 40px;
  height: 39px;
  margin-right: 1px;
}
.tool:disabled .icon {
  opacity: 0.36;
  filter: grayscale(0.5);
}
.tool:disabled .tri {
  background: #999;
}
.tool.drop {
  justify-content: flex-start;
  width: 52px;
  padding-left: 8px;
  gap: 10px;
}
.tool.slim {
  width: 26px;
}
.tool.pressed {
  border: 1px solid #a8a8a8;
  border-radius: 2px;
  background: #dadada;
}
.grip-cell {
  display: flex;
  justify-content: center;
  flex: none;
  width: 16px;
}
.grip-cell.wide {
  width: 20px;
}
.gap {
  flex: none;
}

.work {
  display: flex;
  flex: 1;
  min-height: 0;
}
.dock {
  flex: none;
  width: 51px;
  box-sizing: border-box;
  overflow: hidden;
  border-right: 1px solid #b0b0b0;
  background: linear-gradient(90deg, #fafafa, #ececec);
}
.dock-grip {
  display: block;
  width: 17px;
  height: 5px;
  margin: 7px 0 1px 14px;
}
.dock-tool {
  display: flex;
  align-items: center;
  width: 50px;
  height: 40px;
  padding-left: 3px;
  gap: 11px;
}
.dock-tool .large {
  margin-left: -3px;
}
.panel {
  display: flex;
  flex-direction: column;
  flex: none;
  width: 325px;
  box-sizing: border-box;
  border-left: 1px solid #b0b0b0;
  border-right: 1px solid #b0b0b0;
}
.panel h2 {
  flex: none;
  height: 22px;
  margin: 0;
  padding-left: 3px;
  font: inherit;
  line-height: 22px;
}
.panel-tools {
  display: flex;
  flex: none;
  height: 38px;
  padding-left: 2px;
  overflow: hidden;
}
.panel-tool {
  display: flex;
  align-items: center;
  justify-content: center;
  flex: none;
  min-width: 33px;
  gap: 6px;
}
.panel-tool:has(.tri) {
  width: 46px;
}
.tree-box {
  display: flex;
  flex: 1;
  min-height: 0;
  border-top: 1px solid #a0a0a0;
  background: #fff;
}
.tree {
  flex: 1;
  min-width: 0;
  overflow: hidden;
}
.tree li {
  display: flex;
  align-items: center;
  height: 18px;
  white-space: nowrap;
}
.expander {
  display: flex;
  justify-content: center;
  flex: none;
  width: 20px;
}
.tree input {
  appearance: none;
  flex: none;
  box-sizing: border-box;
  width: 14px;
  height: 14px;
  margin: 0 6px 0 3px;
  border: 1px solid #b8b8b8;
  background: #fff;
}
.tree input:checked::before {
  content: "";
  display: block;
  width: 8px;
  height: 9px;
  margin: 1px 2px;
  background: #000;
  clip-path: polygon(0 45%, 22% 45%, 38% 68%, 78% 0, 100% 0, 48% 100%, 30% 100%);
}
.tree-icon {
  width: 16px;
  height: 16px;
  margin-right: 6px;
}
.tree-icon.large {
  width: 20px;
  height: 18px;
  margin-right: 8px;
}
.tree label {
  flex: 1;
  min-width: 0;
  overflow: hidden;
}
.bold {
  font-weight: 700;
}
.muted {
  color: #808080;
  font-weight: 700;
  font-style: italic;
}
.tree .selected {
  background: #0078d7;
  color: #fff;
}
.selected label {
  text-decoration: underline;
}
.filter {
  margin-right: 4px;
  background: #f4f4f4;
}
.scroll {
  flex: none;
  width: 14px;
  border-left: 1px solid #d0d0d0;
  background: #f5f5f5;
}
.scroll-up {
  display: flex;
  justify-content: center;
  height: 13px;
  padding-top: 4px;
  box-sizing: border-box;
  border-bottom: 1px solid #b8b8b8;
}
.splitter {
  display: flex;
  align-items: flex-end;
  justify-content: center;
  flex: none;
  width: 6px;
  padding-bottom: 64px;
}
.split-grip {
  width: 3px;
}
.map {
  flex: 1;
  min-width: 0;
  margin-top: 1px;
  border-top: 1px solid #a0a0a0;
  border-left: 1px solid #909090;
}
.map svg {
  display: block;
  width: 100%;
  height: 100%;
}
.casing {
  fill: none;
  stroke: #777;
}
.asphalt {
  fill: none;
  stroke: #fff;
}
.buildings {
  fill: #cf999b;
  stroke: #8f7f7f;
}
.foot {
  fill: none;
  stroke: #fb8c80;
  stroke-width: 2px;
  stroke-dasharray: 4 3;
}
.route {
  fill: #c01818;
  stroke: #f5f3d6;
  stroke-width: 1px;
  paint-order: stroke;
  font-family: "DejaVu Sans Condensed", "Noto Sans", sans-serif;
  font-size: 9px;
}
.house,
.street {
  stroke: #fff;
  stroke-width: 3px;
  stroke-linejoin: round;
  paint-order: stroke;
  font-family: "Noto Sans", sans-serif;
  font-size: 11px;
}
.house {
  text-anchor: middle;
}
</style>
